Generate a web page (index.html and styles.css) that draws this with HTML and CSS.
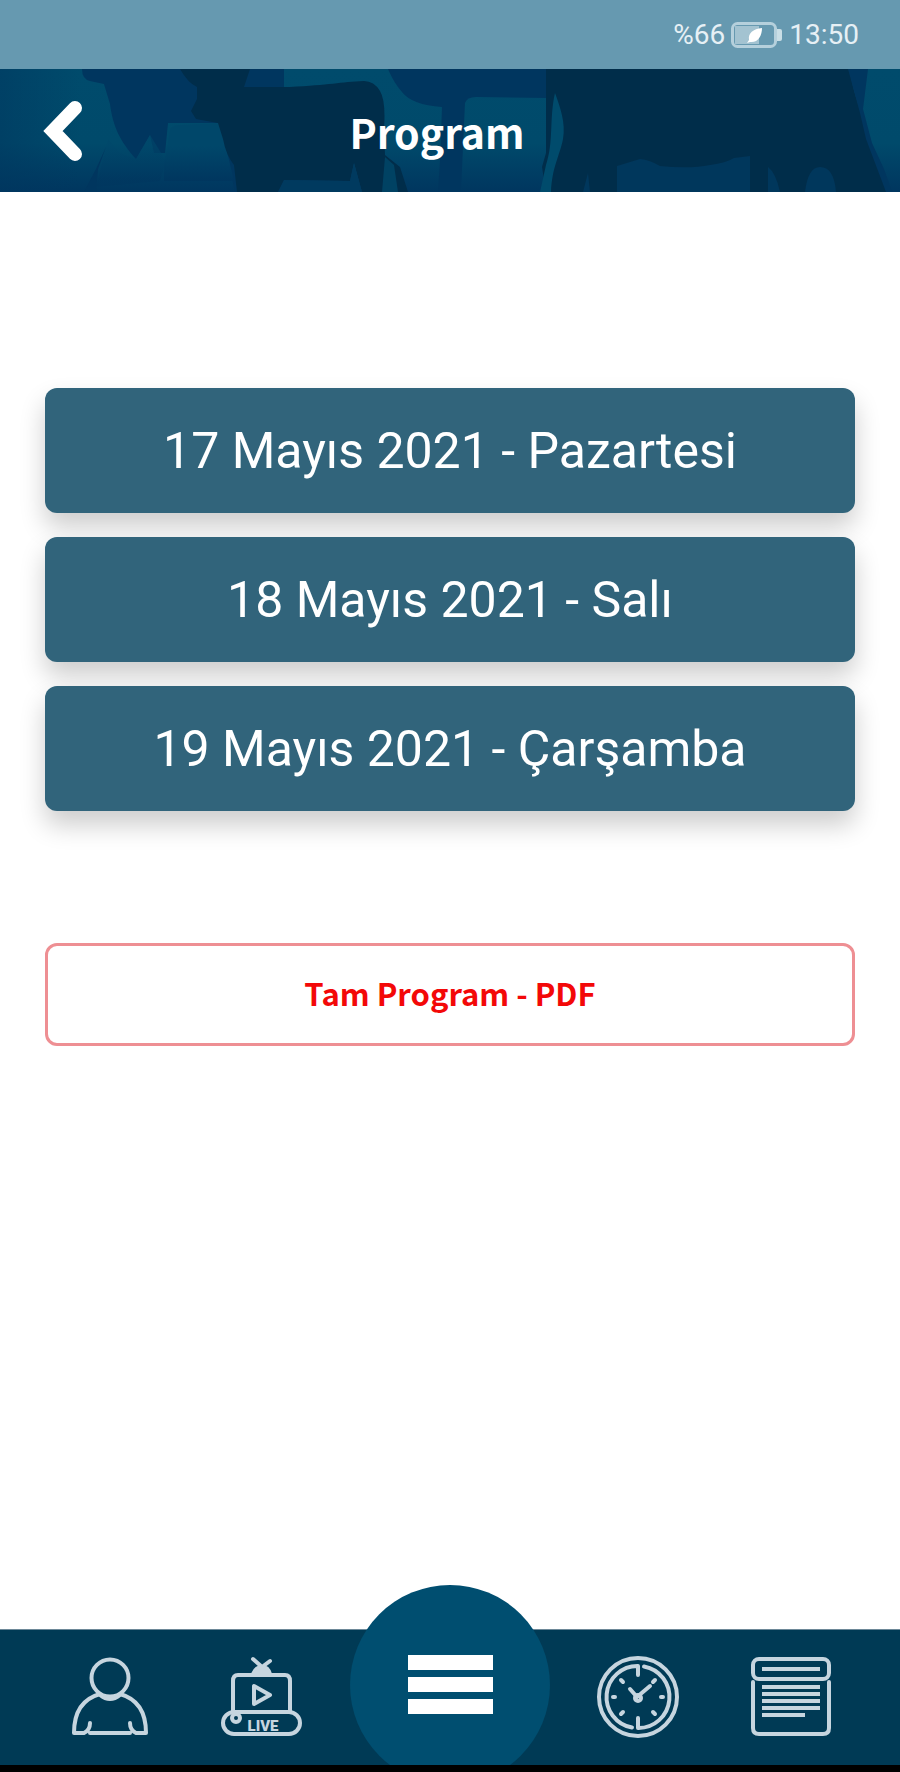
FILE: index.html
```html
<!DOCTYPE html>
<html lang="tr">
<head>
    <meta charset="UTF-8">
    <meta name="viewport" content="width=device-width, initial-scale=1.0">
    <title>Program</title>
    <link rel="stylesheet" href="styles.css">
</head>
<body>
    <div class="status-bar">
        <span>%66</span>
        <svg class="battery" width="52" height="26" viewBox="0 0 52 26" aria-hidden="true">
            <rect x="1.5" y="1.5" width="43" height="23" rx="5" fill="none" stroke="#b5d0dc" stroke-width="3"/>
            <rect x="4" y="4" width="24" height="18" fill="#a3c3d1"/>
            <path d="M46 7h3a2 2 0 0 1 2 2v8a2 2 0 0 1-2 2h-3z" fill="#c9dee6"/>
            <path d="M31 6c-9 1-14 5-13 12l-2 3 3-1c8 1 12-6 12-14z" fill="#fff"/>
        </svg>
        <span>13:50</span>
    </div>

    <header class="header">
        <svg class="header-art" viewBox="0 0 900 123" preserveAspectRatio="none" aria-hidden="true">
            <defs>
                <linearGradient id="meadow" gradientUnits="userSpaceOnUse" x1="0" y1="0" x2="0" y2="123">
                    <stop offset="0" stop-color="#004b6c"/>
                    <stop offset="0.6" stop-color="#004a6b"/>
                    <stop offset="1" stop-color="#00365f"/>
                </linearGradient>
                <linearGradient id="grass" gradientUnits="userSpaceOnUse" x1="0" y1="54" x2="0" y2="112">
                    <stop offset="0" stop-color="#00476a"/>
                    <stop offset="0.4" stop-color="#00476a"/>
                    <stop offset="1" stop-color="#00365f"/>
                </linearGradient>
                <linearGradient id="edge" x1="0" y1="0" x2="1" y2="0">
                    <stop offset="0" stop-color="#00365f" stop-opacity="0.5"/>
                    <stop offset="1" stop-color="#00365f" stop-opacity="0"/>
                </linearGradient>
            </defs>
            <rect width="900" height="123" fill="url(#meadow)"/>
            <rect width="80" height="123" fill="url(#edge)"/>
            <!-- cows in the back -->
            <path d="M82 0Q82 10 90 12L104 15L110 35C113 58 120 72 136 90L150 66L154 84L165 84L168 54L220 54L235 123H96L98 100L106 78L96 100L84 123H290V0Z" fill="#00365f"/>
            <path d="M108 70L120 84L136 90L150 66L166 92L160 112L96 118Z" fill="url(#grass)" opacity="0.6"/>
            <path d="M164 96L170 60Q172 56 180 56L220 54L234 112H164Z" fill="url(#grass)"/>
            <path d="M284 0H392L402 22L420 35L442 37V80L455 123H380V30L284 18Z" fill="url(#meadow)"/>
            <path d="M388 0H556V123H438L440 92L442 38Q412 36 402 23Q394 14 388 0Z" fill="#00365f"/>
            <path d="M465 34Q467 28 476 28L546 29L548 123H461Z" fill="url(#meadow)"/>
            <!-- cows in the front -->
            <path d="M180 0H250L244 18L290 18C330 16 340 13 364 12Q374 12 380 22Q386 32 384 60L385 86L400 98L408 123H362L354 94L350 112L284 111L278 123H237L234 96Q226 86 223 70L218 54L196 50L191 42L197 30V18Q188 14 180 0Z" fill="#002d4a"/>
            <path d="M362 123L354 94L350 112L284 111L278 123Z" fill="#003a5f"/>
            <path d="M385 88L394 96L398 123H382Z" fill="#004263"/>
            <path d="M546 0H850C852 18 858 36 864 50L870 76L880 104L888 123H546L542 98L546 84Z" fill="#002d4a"/>
            <path d="M555 24C560 38 566 54 563 70C560 86 552 98 551 123H540L546 96C554 72 549 50 555 24Z" fill="#004b6c"/>
            <path d="M617 97L640 90Q650 91 660 97Q690 100 710 96Q726 94 734 89L750 87V123H617ZM768 98Q776 104 780 123H768ZM805 123Q808 98 820 98Q834 98 836 123ZM583 123L588 104L590 123Z" fill="#00375c"/>
            <path d="M848 0H868L863 40L872 74L884 100L892 123H886L866 70L860 44Z" fill="#00365f"/>
        </svg>
        <button class="back-button" type="button" aria-label="Geri">
            <svg width="44" height="64" viewBox="0 0 44 64" aria-hidden="true">
                <path d="M35 9L13 32L35 55" fill="none" stroke="#fff" stroke-width="14" stroke-linecap="round" stroke-linejoin="miter"/>
            </svg>
        </button>
        <h1 class="title">Program</h1>
    </header>

    <main class="content">
        <div class="days">
            <button class="day-button" type="button">17 Mayıs 2021 - Pazartesi</button>
            <button class="day-button" type="button">18 Mayıs 2021 - Salı</button>
            <button class="day-button" type="button">19 Mayıs 2021 - Çarşamba</button>
        </div>
        <a class="pdf-link" href="#">Tam Program - PDF</a>
    </main>

    <nav class="navbar">
        <a class="nav-item" href="#" aria-label="Profil">
            <svg width="84" height="84" viewBox="0 0 84 84">
                <circle cx="42" cy="22" r="18.5"/>
                <path d="M32 38C14 43 6 57 6 77H16Q22 74 22 67M52 38C70 43 78 57 78 77H68Q62 74 62 67M22 77H62M32 39Q42 47 52 39"/>
            </svg>
        </a>
        <a class="nav-item" href="#" aria-label="Canlı yayın">
            <svg width="84" height="84" viewBox="0 0 84 84">
                <path d="M13 55V25Q13 19 18 19H65Q70 19 70 25V55"/>
                <path class="solid" d="M33 18Q36 11 42 11T50 18Z"/>
                <path d="M42 11L33 3M42 11L50 5"/>
                <path d="M34 30V48L50 39Z"/>
                <rect x="3" y="56" width="77" height="22" rx="11"/>
                <circle cx="16" cy="62" r="4"/>
                <text class="live" x="43" y="75" text-anchor="middle">LIVE</text>
            </svg>
        </a>
        <div class="menu-slot">
            <button class="menu-button" type="button" aria-label="Menü">
                <span class="menu-line"></span>
                <span class="menu-line"></span>
                <span class="menu-line"></span>
            </button>
        </div>
        <a class="nav-item" href="#" aria-label="Saat">
            <svg width="84" height="84" viewBox="0 0 84 84">
                <circle cx="42" cy="41" r="39"/>
                <path d="M48 10.5A31 31 0 0 1 42 72V62M36 71.5A31 31 0 0 1 42 10V19"/>
                <path d="M34 33L41 41L54 30M25 24L27 26M59 24L57 26M25 58L27 56M59 58L57 56M17 41H19M65 41H67"/>
                <circle cx="42" cy="42" r="3"/>
            </svg>
        </a>
        <a class="nav-item" href="#" aria-label="Bildiriler">
            <svg width="84" height="84" viewBox="0 0 84 84">
                <rect x="5" y="3" width="76" height="20" rx="6"/>
                <path d="M5 26V72Q5 78 11 78H75Q81 78 81 72V26"/>
                <path class="lines" d="M14 13H72M14 31H72M14 38H72M14 45H72M14 52H72M14 59H57"/>
            </svg>
        </a>
    </nav>
</body>
</html>
```
FILE: styles.css
```css
* {
    box-sizing: border-box;
}

body {
    margin: 0;
    min-height: 100vh;
    display: flex;
    flex-direction: column;
    background: #fff;
    font-family: Roboto, sans-serif;
}

button {
    border: none;
    padding: 0;
    font-family: inherit;
    cursor: pointer;
}

/* Status bar */
.status-bar {
    height: 69px;
    padding-right: 41px;
    display: flex;
    align-items: center;
    justify-content: flex-end;
    gap: 6px;
    background: #6699b0;
    color: #e6f0f5;
    font-size: 28px;
    line-height: 32px;
}

/* Header */
.header {
    position: relative;
    height: 123px;
    padding: 0 40px;
    display: grid;
    grid-template-columns: 48px 1fr 48px;
    align-items: center;
    background: #00365f;
    overflow: hidden;
}

.header-art {
    position: absolute;
    top: 0;
    left: 0;
    width: 100%;
    height: 100%;
}

.back-button,
.title {
    position: relative;
}

.back-button {
    width: 48px;
    height: 64px;
    background: none;
    text-align: left;
}

.back-button svg {
    display: block;
}

.title {
    margin: 0;
    padding-right: 26px;
    color: #fff;
    font-family: "Noto Sans CJK JP", sans-serif;
    font-size: 41px;
    font-weight: 700;
    line-height: 64px;
    text-align: center;
}

/* Program days */
.content {
    flex: 1;
    padding: 196px 45px 64px;
}

.days {
    display: flex;
    flex-direction: column;
    gap: 24px;
}

.day-button {
    height: 125px;
    border-radius: 12px;
    background: #31647b;
    box-shadow: 0 14px 26px rgba(0, 0, 0, 0.2);
    color: #fff;
    font-size: 50px;
    line-height: 64px;
}

.pdf-link {
    height: 103px;
    margin-top: 132px;
    padding-bottom: 4px;
    display: flex;
    align-items: center;
    justify-content: center;
    border: 3px solid #ee8f93;
    border-radius: 12px;
    color: #f30808;
    font-family: "Noto Sans CJK JP", sans-serif;
    font-size: 31px;
    font-weight: 700;
    line-height: 48px;
    text-decoration: none;
}

/* Bottom navigation */
.navbar {
    height: 143px;
    padding: 0 34px;
    display: grid;
    grid-template-columns: 1fr 1fr 224px 1fr 1fr;
    background: #003a55;
    border-top: 1px solid #6d8898;
    border-bottom: 7px solid #000;
}

.nav-item {
    display: flex;
    align-items: center;
    justify-content: center;
}

.nav-item svg {
    fill: none;
    stroke: #c6d5df;
    stroke-width: 4;
    stroke-linecap: round;
    stroke-linejoin: round;
}

.nav-item .lines {
    stroke-linecap: butt;
}

.nav-item .solid {
    fill: #c6d5df;
}

.nav-item .live {
    fill: #c6d5df;
    stroke: none;
    font-size: 15px;
    font-weight: 900;
}

/* the circle rises above the bar and is cut at its bottom edge */
.menu-slot {
    height: 180px;
    margin-top: -45px;
    display: flex;
    justify-content: center;
    overflow: hidden;
}

.menu-button {
    flex: none;
    width: 200px;
    height: 200px;
    padding-bottom: 2px;
    display: flex;
    flex-direction: column;
    align-items: center;
    justify-content: center;
    gap: 7px;
    border-radius: 50%;
    background: #004e70;
}

.menu-line {
    width: 85px;
    height: 15px;
    background: #fff;
}
```
